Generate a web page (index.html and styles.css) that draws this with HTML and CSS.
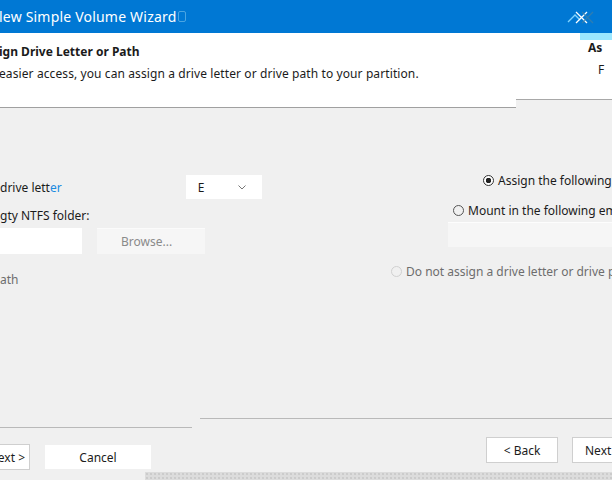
FILE: index.html
```html
<!DOCTYPE html>
<html>
<head>
<meta charset="utf-8">
<link rel="stylesheet" href="styles.css">
</head>
<body>
<div class="win">
  <div class="titlebar">
    <span class="title">lew Simple Volume Wizard</span>
    <span class="title-ghost"></span>
    <svg class="close" width="34" height="16" viewBox="0 0 34 16">
      <path d="M2 13 L9 6 L14 11" stroke="#7fd4ff" stroke-width="1.4" fill="none"/>
      <path d="M10 3 L21 14 M21 3 L10 14" stroke="#ffffff" stroke-width="1.3" fill="none"/>
      <path d="M16 3 L27 14 M27 3 L16 14" stroke="#3b7ea8" stroke-width="1.3" fill="none" opacity="0.8"/>
    </svg>
  </div>
  <div class="header">
    <div class="head-left">
      <div class="h-title">ign Drive Letter or Path</div>
      <div class="h-sub">easier access, you can assign a drive letter or drive path to your partition.</div>
    </div>
    <div class="head-right">
      <div class="cyan"></div>
      <div class="hr-title">As</div>
      <div class="hr-sub">F</div>
    </div>
  </div>
  <div class="body">
    <div class="col-left">
      <div class="row r-letter">
        <span class="txt">drive lett<span class="blue">er</span></span>
        <span class="combo"><span class="combo-val">E</span><svg width="8" height="5" viewBox="0 0 8 5"><path d="M0.5 0.5 L4 4 L7.5 0.5" stroke="#777" fill="none"/></svg></span>
      </div>
      <div class="row r-folder"><span class="txt">gty NTFS folder:</span></div>
      <div class="row r-input">
        <span class="input"></span>
        <span class="browse">Browse...</span>
      </div>
      <div class="row r-path"><span class="txt grey">ath</span></div>
    </div>
    <div class="col-right">
      <div class="radio-row rr-assign"><span class="radio on"></span><span class="txt">Assign the following drive letter:</span></div>
      <div class="radio-row rr-mount"><span class="radio"></span><span class="txt">Mount in the following empty NTFS folder:</span></div>
      <div class="ghost-box"></div>
      <div class="radio-row rr-none"><span class="radio faint"></span><span class="txt grey">Do not assign a drive letter or drive path</span></div>
    </div>
  </div>
  <div class="lines">
    <div class="line-right"></div>
    <div class="line-left"></div>
  </div>
  <div class="buttons">
    <div class="btn-group left">
      <span class="btn next-l">Next &gt;</span>
      <span class="btn cancel">Cancel</span>
    </div>
    <div class="btn-group right">
      <span class="btn back">&lt; Back</span>
      <span class="btn next-r">Next &gt;</span>
    </div>
  </div>
  <div class="strip-row">
    <div class="strip"></div>
  </div>
</div>
</body>
</html>
```
FILE: styles.css
```css
* { box-sizing: border-box; }
html, body { margin: 0; padding: 0; }
body {
  width: 612px;
  height: 480px;
  overflow: hidden;
  background: #f0f0f0;
  font-family: "Noto Sans", "Open Sans", sans-serif;
  font-size: 12px;
  color: #1b1b1b;
}
.win { width: 612px; height: 480px; display: flex; flex-direction: column; overflow: hidden; }

.titlebar {
  height: 33px;
  background: #0078d4;
  display: flex;
  align-items: center;
  flex: none;
}
.title {
  color: #fff;
  font-size: 14px;
  margin-left: -1px;
  letter-spacing: 0.2px;
}
.title-ghost {
  width: 8px; height: 11px;
  margin-left: 2px;
  border: 1px solid rgba(150,210,240,0.5);
  border-radius: 2px;
}
.close { margin-left: auto; margin-right: 12px; }

.header {
  display: flex;
  height: 75px;
  flex: none;
}
.head-left {
  width: 516px;
  background: #fff;
  border-bottom: 1px solid #a0a0a0;
  padding-top: 10px;
  flex: none;
}
.h-title { font-weight: bold; font-size: 12px; margin-left: -1px; }
.h-sub { margin-top: 5px; margin-left: -1px; letter-spacing: 0.1px; }
.head-right {
  flex: 1;
  background: #fff;
  height: 67px;
  border-bottom: 1px solid #a8a8a8;
  padding-left: 72px;
  position: relative;
}
.cyan {
  position: absolute;
  right: 0; top: 0;
  width: 32px; height: 7px;
  background: #9be7ff;
}
.hr-title { font-weight: bold; margin-top: 6px; }
.hr-sub { margin-top: 5px; padding-left: 10px; }

.body {
  display: flex;
  height: 309px;
  flex: none;
}
.col-left { width: 300px; flex: none; }
.col-right { flex: 1; overflow: hidden; }
.row { display: flex; align-items: center; }
.txt { white-space: nowrap; }
.blue { color: #1a8be0; }
.grey { color: #6d6d6d; }
.r-letter { margin-top: 67px; height: 24px; }
.combo {
  margin-left: 124px;
  width: 76px; height: 24px;
  background: #fff;
  display: flex; align-items: center;
  padding-left: 12px; padding-right: 16px;
}
.combo-val { flex: 1; }
.r-folder { margin-top: 6px; height: 20px; }
.r-input { margin-top: 3px; height: 26px; }
.input { width: 82px; height: 26px; background: #fff; }
.browse {
  margin-left: 15px;
  width: 108px; height: 26px;
  background: #f6f6f6;
  border-top: 1px solid #fbfbfb;
  color: #8a8a8a;
  display: flex; align-items: center;
  padding-left: 24px;
}
.r-path { margin-top: 15px; height: 20px; }

.radio-row { display: flex; align-items: center; height: 20px; }
.radio {
  width: 11px; height: 11px;
  border-radius: 50%;
  border: 1px solid #555;
  margin-right: 4px;
  flex: none;
}
.radio.on { background: radial-gradient(circle, #222 0 2.5px, #fff 3px); border-color: #333; }
.radio.faint { border-color: #d0d0d0; }
.rr-assign { margin-top: 62px; padding-left: 183px; }
.rr-mount { margin-top: 10px; padding-left: 153px; }
.ghost-box {
  margin-top: 2px;
  margin-left: 148px;
  height: 25px;
  background: #f6f6f6;
  border-top: 1px solid #fdfdfd;
}
.rr-none { margin-top: 14px; padding-left: 91px; }

.lines { height: 16px; flex: none; }
.line-right { margin-left: 200px; height: 1px; background: #b9b9b9; margin-top: 1px; }
.line-left { width: 192px; height: 1px; background: #b9b9b9; margin-top: 8px; }

.buttons { display: flex; height: 39px; flex: none; }
.btn-group { display: flex; }
.btn-group.left { width: 300px; padding-top: 11px; }
.btn-group.right { flex: 1; padding-top: 4px; padding-left: 190px; }
.btn {
  height: 26px;
  background: #fff;
  border: 1px solid #cfcfcf;
  display: flex; align-items: center; justify-content: center;
  white-space: nowrap;
  overflow: hidden;
}
.next-l { width: 32px; margin-left: -2px; justify-content: flex-end; padding-right: 4px; border-left: none; }
.cancel { width: 108px; margin-left: 14px; border-color: #f0f0f0; }
.back { width: 72px; }
.next-r { width: 40px; margin-left: 14px; justify-content: flex-start; padding-left: 12px; border-right: none; }

.strip-row { flex: 1; display: flex; }
.strip {
  margin-left: 145px;
  flex: 1;
  background-color: #dcdcdc;
  background-image: radial-gradient(circle, #b8b8b8 0.6px, transparent 0.8px);
  background-size: 4px 4px;
}
```
